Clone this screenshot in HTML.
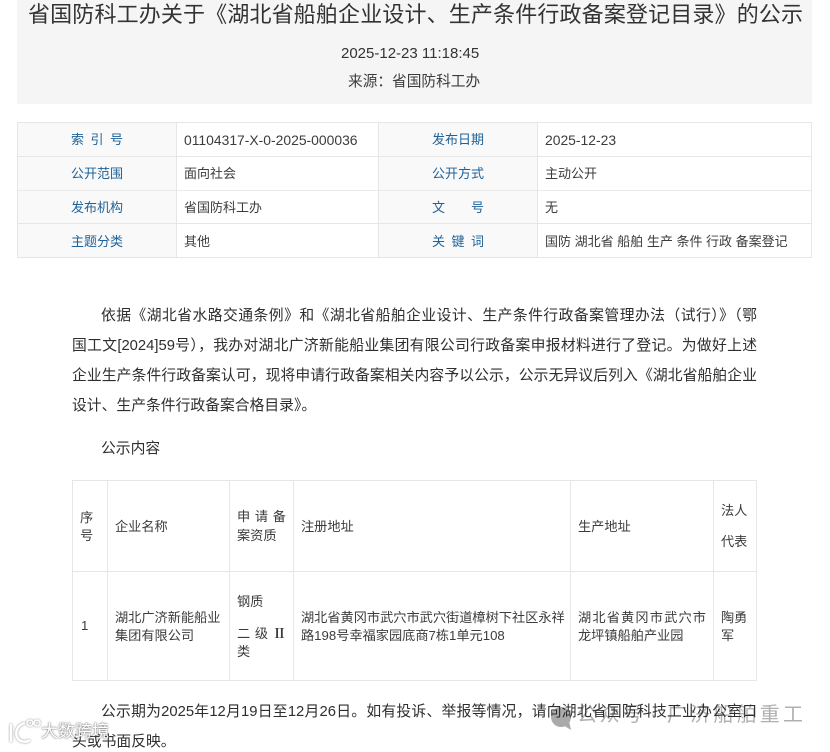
<!DOCTYPE html>
<html lang="zh"><head><meta charset="utf-8"><title>公示</title>
<style>
html,body{margin:0;padding:0;background:#fff}
body{position:relative;width:830px;height:747px;overflow:hidden;font-family:"Liberation Sans","Noto Sans CJK SC",sans-serif;color:#3c3c3c;font-size:13px}
#w{position:absolute;left:0;top:0;width:830px;height:747px;filter:blur(.3px)}
.t{position:absolute;white-space:nowrap;line-height:20px}
.j{text-align-last:justify}
.b{color:#1f6299}
.hd{position:absolute;left:17px;top:0;width:795px;height:104px;background:#f5f5f5}
.v,.h{position:absolute;background:#e6e6e6}
.v{width:1px}.h{height:1px}
.lab{position:absolute;background:#f9f9f9}
.c{color:#2e2e2e;font-size:14.8px}
.m{font-size:13.2px}
</style></head><body><div id="w">
<div class="hd"></div>
<div class="t" style="left:28px;top:0;width:775px;font-size:22px;line-height:30px;color:#333;text-align-last:justify">省国防科工办关于《湖北省船舶企业设计、生产条件行政备案登记目录》的公示</div>
<div class="t" style="left:341px;top:44px;font-size:15px;color:#333">2025-12-23 11:18:45</div>
<div class="t" style="left:348px;top:72px;font-size:14.7px">来源&#xFF1A;</div>
<div class="t" style="left:392px;top:72px;font-size:14.7px">省国防科工办</div>

<div class="lab" style="left:18px;top:123px;width:159px;height:134px"></div>
<div class="lab" style="left:379px;top:123px;width:158px;height:134px"></div>
<div class="h" style="left:17px;top:122px;width:795px"></div>
<div class="h" style="left:17px;top:156px;width:795px"></div>
<div class="h" style="left:17px;top:190px;width:795px;background:#eaeaea"></div>
<div class="h" style="left:17px;top:223px;width:795px"></div>
<div class="h" style="left:17px;top:257px;width:795px"></div>
<div class="v" style="left:17px;top:122px;height:136px"></div>
<div class="v" style="left:176px;top:122px;height:136px"></div>
<div class="v" style="left:378px;top:122px;height:136px"></div>
<div class="v" style="left:537px;top:122px;height:136px"></div>
<div class="v" style="left:811px;top:122px;height:136px"></div>

<div class="t b j" style="left:71px;top:130px;width:52px">索 引 号</div>
<div class="t b" style="left:71px;top:164px">公开范围</div>
<div class="t b" style="left:71px;top:198px">发布机构</div>
<div class="t b" style="left:71px;top:232px">主题分类</div>
<div class="t b" style="left:432px;top:130px">发布日期</div>
<div class="t b" style="left:432px;top:164px">公开方式</div>
<div class="t b j" style="left:432px;top:198px;width:52px">文 号</div>
<div class="t b j" style="left:432px;top:232px;width:52px">关 键 词</div>
<div class="t" style="left:184px;top:130px;font-size:13.9px">01104317-X-0-2025-000036</div>
<div class="t" style="left:184px;top:164px">面向社会</div>
<div class="t" style="left:184px;top:198px">省国防科工办</div>
<div class="t" style="left:184px;top:232px">其他</div>
<div class="t" style="left:545px;top:130px;font-size:13.9px">2025-12-23</div>
<div class="t" style="left:545px;top:164px">主动公开</div>
<div class="t" style="left:545px;top:198px">无</div>
<div class="t" style="left:545px;top:232px;width:242px;text-align-last:justify">国防 湖北省 船舶 生产 条件 行政 备案登记</div>

<div class="t c j" style="left:101px;top:306px;width:656px">依据《湖北省水路交通条例》和《湖北省船舶企业设计、生产条件行政备案管理办法&#xFF08;试行&#xFF09;》&#xFF08;鄂</div>
<div class="t c j" style="left:72px;top:336px;width:685px">国工文[2024]59号&#xFF09;&#xFF0C;我办对湖北广济新能船业集团有限公司行政备案申报材料进行了登记。为做好上述</div>
<div class="t c j" style="left:72px;top:366px;width:685px">企业生产条件行政备案认可&#xFF0C;现将申请行政备案相关内容予以公示&#xFF0C;公示无异议后列入《湖北省船舶企业</div>
<div class="t c" style="left:72px;top:396px">设计、生产条件行政备案合格目录》。</div>
<div class="t c" style="left:101px;top:439px">公示内容</div>

<div class="h" style="left:72px;top:480px;width:685px"></div>
<div class="h" style="left:72px;top:571px;width:685px"></div>
<div class="h" style="left:72px;top:680px;width:685px"></div>
<div class="v" style="left:72px;top:480px;height:201px"></div>
<div class="v" style="left:107px;top:480px;height:201px"></div>
<div class="v" style="left:229px;top:480px;height:201px"></div>
<div class="v" style="left:293px;top:480px;height:201px"></div>
<div class="v" style="left:570px;top:480px;height:201px"></div>
<div class="v" style="left:713px;top:480px;height:201px"></div>
<div class="v" style="left:756px;top:480px;height:201px"></div>

<div class="t m" style="left:80px;top:508px">序</div>
<div class="t m" style="left:80px;top:526px">号</div>
<div class="t m" style="left:115px;top:517px">企业名称</div>
<div class="t m j" style="left:237px;top:507px;width:49px">申 请 备</div>
<div class="t m" style="left:237px;top:526px">案资质</div>
<div class="t m" style="left:301px;top:517px">注册地址</div>
<div class="t m" style="left:578px;top:517px">生产地址</div>
<div class="t m" style="left:721px;top:501px">法人</div>
<div class="t m" style="left:721px;top:532px">代表</div>

<div class="t m" style="left:81px;top:616px">1</div>
<div class="t m" style="left:115px;top:608px">湖北广济新能船业</div>
<div class="t m" style="left:115px;top:626px">集团有限公司</div>
<div class="t m" style="left:237px;top:592px">钢质</div>
<div class="t m j" style="left:237px;top:623px;width:49px">二 级 <span style="font-family:'Noto Serif CJK SC',serif;font-weight:700">Ⅱ</span></div>
<div class="t m" style="left:237px;top:642px">类</div>
<div class="t m" style="left:301px;top:608px;width:262px;text-align-last:justify">湖北省黄冈市武穴市武穴街道樟树下社区永祥</div>
<div class="t m" style="left:301px;top:626px">路198号幸福家园底商7栋1单元108</div>
<div class="t m" style="left:578px;top:608px;width:128px;text-align-last:justify">湖北省黄冈市武穴市</div>
<div class="t m" style="left:578px;top:626px">龙坪镇船舶产业园</div>
<div class="t m" style="left:721px;top:608px">陶勇</div>
<div class="t m" style="left:721px;top:626px">军</div>

<svg style="position:absolute;left:549px;top:705px" width="26" height="26" viewBox="0 0 26 26"><circle cx="12" cy="12" r="10" fill="#aaa"/><path d="M14 20L22 25L20 16Z" fill="#aaa"/></svg>
<div class="t" style="left:577px;top:701px;font-size:20px;line-height:28px;letter-spacing:2.6px;color:#b0b0b0">公众号</div>
<div class="t" style="left:650px;top:701px;font-size:20px;line-height:28px;color:#b0b0b0">·</div>
<div class="t" style="left:667px;top:701px;font-size:20px;line-height:28px;letter-spacing:3.2px;color:#b0b0b0">广济船舶重工</div>

<div class="t c j" style="left:101px;top:702px;width:656px">公示期为2025年12月19日至12月26日。如有投诉、举报等情况&#xFF0C;请向湖北省国防科技工业办公室口</div>
<div class="t c" style="left:72px;top:732px">头或书面反映。</div>

<svg style="position:absolute;left:6px;top:718px" width="36" height="28" viewBox="0 0 36 28"><g fill="none" stroke="#fff" stroke-width="2.4" style="filter:drop-shadow(0 0 1px #888)"><path d="M5 6V24"/><path d="M19 5C11 7 9 14 11 19C13 24 20 25 24 22"/><circle cx="24" cy="5" r="3" stroke-width="1.5"/><circle cx="31" cy="5" r="3" stroke-width="1.5"/></g></svg>
<div class="t" style="left:41px;top:722px;font-size:17px;color:#fff;text-shadow:0 0 2px #777,0 0 1px #777">大数跨境</div>
</div></body></html>
